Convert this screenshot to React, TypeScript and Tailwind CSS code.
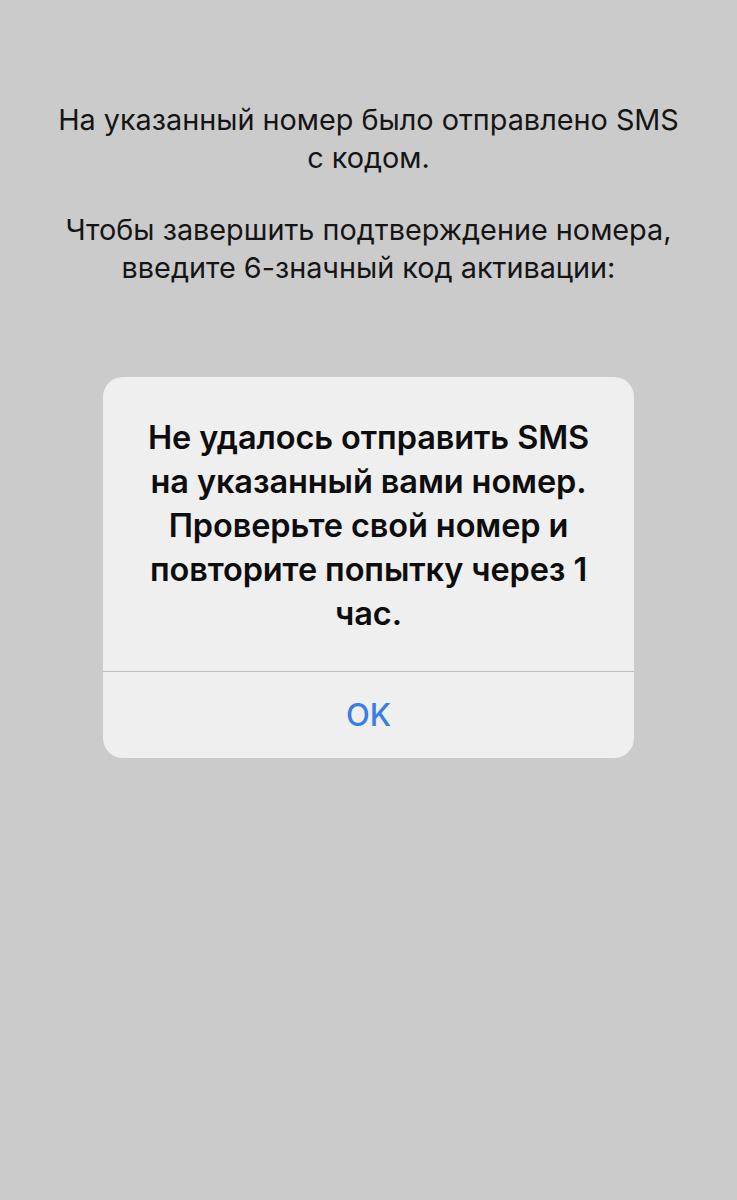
export default function App() {
  return (
    <div className="w-[737px] h-[1200px] bg-[#cbcbcb] flex flex-col items-center" style={{ fontFamily: 'Inter, "Noto Sans", sans-serif' }}>
      <div className="pt-[101px] w-full flex flex-col items-center text-center text-[#151515] text-[28.8px] leading-[38px] tracking-[0px]">
        <p className="whitespace-nowrap">На указанный номер было отправлено SMS<br />с кодом.</p>
        <p className="mt-[34px] whitespace-nowrap">Чтобы завершить подтверждение номера,<br />введите 6-значный код активации:</p>
      </div>
      <div className="mt-[90px] w-[531px] rounded-[20px] bg-[#efefef] flex flex-col">
        <div className="pt-[39px] pb-[35px] text-center text-[#0d0d0d] text-[32.5px] font-semibold leading-[44px] tracking-[-0.1px] whitespace-nowrap">
          Не удалось отправить SMS<br />на указанный вами номер.<br />Проверьте свой номер и<br />повторите попытку через 1<br />час.
        </div>
        <div className="h-px bg-[#bdbdbd]" />
        <div className="h-[86px] flex items-center justify-center text-[#3a7ee4] text-[31px] font-medium">OK</div>
      </div>
    </div>
  );
}
